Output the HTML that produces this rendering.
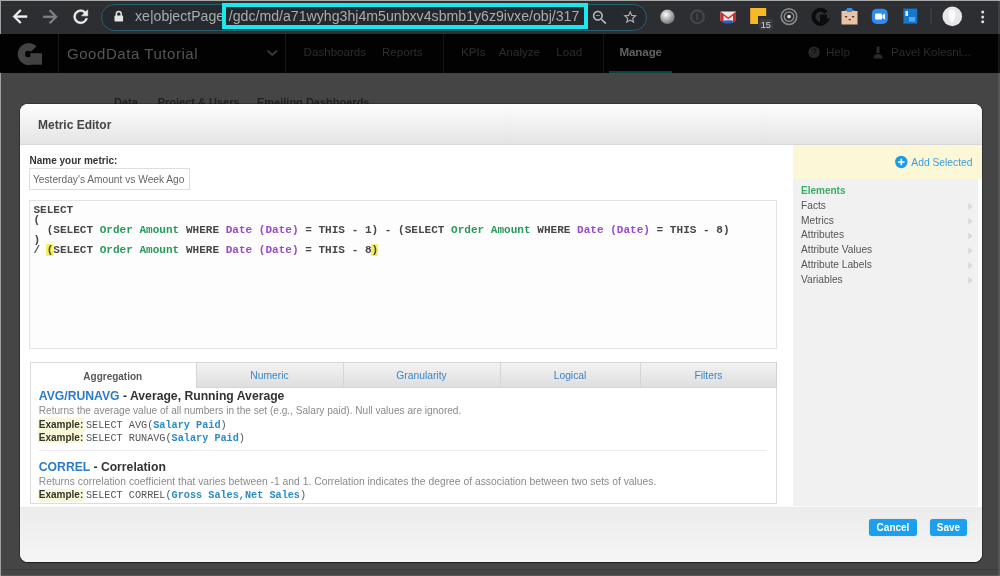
<!DOCTYPE html>
<html><head><meta charset="utf-8">
<style>
*{margin:0;padding:0;box-sizing:border-box}
html,body{width:1000px;height:576px;overflow:hidden;background:#454545;font-family:"Liberation Sans",sans-serif;position:relative}
.a{position:absolute}
.t{position:absolute;white-space:nowrap;line-height:1}
svg{position:absolute;overflow:visible}
</style></head>
<body><div id="root" style="position:absolute;left:0;top:0;width:1000px;height:576px;background:#454545;filter:blur(0.4px)">
<div class="a" style="left:0px;top:0px;width:1000.00px;height:34.00px;background:#2c2e32"></div>
<div class="a" style="left:0px;top:0px;width:1000.00px;height:1.00px;background:#a8a8a8"></div>
<div class="a" style="left:0px;top:5px;width:1000.00px;height:1.00px;background:#33353a"></div>
<div class="a" style="left:0px;top:0px;width:1.00px;height:576.00px;background:#a0a0a0"></div>
<svg style="left:0;top:0" width="100" height="34"><path transform="translate(9.5,6) scale(0.875)" d="M20 11H7.83l5.59-5.59L12 4l-8 8 8 8 1.41-1.41L7.83 13H20v-2z" fill="#f0f0f0" stroke="#f0f0f0" stroke-width="0.7"/><path transform="translate(39.9,6.3) scale(0.875)" d="M12 4l-1.41 1.41L16.17 11H4v2h12.17l-5.58 5.59L12 20l8-8z" fill="#808285" stroke="#808285" stroke-width="0.7"/><path transform="translate(70.3,6.3) scale(0.87)" d="M17.65 6.35C16.2 4.9 14.21 4 12 4c-4.42 0-7.99 3.58-7.99 8s3.57 8 7.99 8c3.730 0 6.84-2.55 7.73-6h-2.08c-.82 2.33-3.04 4-5.65 4-3.31 0-6-2.690-6-6s2.69-6 6-6c1.66 0 3.14.69 4.22 1.78L13 11h7V4l-2.35 2.35z" fill="#f0f0f0" stroke="#f0f0f0" stroke-width="0.7"/></svg>
<div class="a" style="left:100.5px;top:3.5px;width:546.00px;height:27.00px;border-radius:13.5px;background:#26292d;border:1.8px solid #27616f"></div>
<svg style="left:0;top:0" width="130" height="34"><path d="M116.4 16V13.9A2.4 2.4 0 0 1 121.2 13.9V16" fill="none" stroke="#e4e4e4" stroke-width="1.5"/><rect x="114.5" y="15.6" width="8.6" height="6" rx="0.8" fill="#e4e4e4"/></svg>
<div class="t" style="left:135.00px;top:9.02px;font-size:14.1px;color:#a9acaf;font-weight:normal;font-family:'Liberation Sans',sans-serif;">xe|objectPage</div>
<div class="a" style="left:222px;top:3px;width:366.00px;height:26.00px;border:4.5px solid #19e8ec"></div>
<div class="a" style="left:226.5px;top:7.5px;width:357.00px;height:17.00px;background:#25282c"></div>
<div class="t" style="left:228.75px;top:8.97px;font-size:14.15px;color:#a9acaf;font-weight:normal;font-family:'Liberation Sans',sans-serif;">/gdc/md/a71wyhg3hj4m5unbxv4sbmb1y6z9ivxe/obj/317</div>
<svg style="left:0;top:0" width="660" height="34"><path transform="translate(590.5,8.3) scale(0.78)" d="M15.5 14h-.79l-.28-.27C15.41 12.59 16 11.110 16 9.5 16 5.91 13.09 3 9.5 3S3 5.91 3 9.5 5.91 16 9.5 16c1.61 0 3.09-.59 4.23-1.57l.27.28v.79l5 4.99L20.49 19l-4.99-5zm-6 0C7.01 14 5 11.99 5 9.5S7.01 5 9.5 5 14 7.01 14 9.5 11.99 14 9.5 14zM7 9h5v1H7z" fill="#b4b6b8"/><path transform="translate(622.04,9.04) scale(0.68)" d="M22 9.24l-7.19-.62L12 2 9.19 8.63 2 9.24l5.46 4.73L5.820 21 12 17.27 18.18 21l-1.63-7.03L22 9.24zM12 15.4l-3.76 2.27 1-4.28-3.32-2.88 4.38-.38L12 6.1l1.71 4.04 4.38.38-3.32 2.88 1 4.28L12 15.4z" fill="#b4b6b8"/></svg>
<svg style="left:0;top:0" width="1000" height="34"><defs><radialGradient id="sph" cx="0.4" cy="0.35" r="0.7"><stop offset="0" stop-color="#ffffff"/><stop offset="0.35" stop-color="#c8c8c8"/><stop offset="1" stop-color="#6e6e6e"/></radialGradient></defs><circle cx="667.4" cy="16.8" r="7.2" fill="url(#sph)"/><circle cx="697.4" cy="16.8" r="6.4" fill="none" stroke="#45464a" stroke-width="2.2"/><path d="M697.2 13.5V20" stroke="#45464a" stroke-width="1.8"/><path d="M720.5 11.5H736V21H720.5Z" fill="#e8e8e8"/><path d="M720.5 11.5L728.2 17.5L736 11.5V21H733V15.5L728.2 19.3L723.5 15.5V21H720.5Z" fill="#d8262b"/><path d="M721 21.5Q728 19 735.5 21.5Q733 24 728 23.5Q723 24 721 21.5Z" fill="#2b5fb8"/><path d="M750.2 8H766.2V16H758V24H750.2Z" fill="#f7b928"/><rect x="758.8" y="18.8" width="14" height="11" rx="2" fill="#3b3c40"/><text x="765.8" y="28" font-family="Liberation Sans" font-size="9" fill="#d8d8d8" text-anchor="middle">15</text><circle cx="789" cy="16.6" r="7.8" fill="none" stroke="#8c8c8c" stroke-width="1.5"/><circle cx="789" cy="16.6" r="4.8" fill="none" stroke="#8c8c8c" stroke-width="1.3"/><circle cx="789" cy="16.6" r="1.8" fill="#dedede"/><path d="M826 12.5A7 7 0 1 0 826.5 20.5L822 20.5L822 16.5L827 16.5" fill="none" stroke="#0c0c0c" stroke-width="4"/><rect x="841.5" y="11" width="16" height="13.5" fill="#e9c3a6"/><path d="M844 11Q849.5 6.5 855 11Z" fill="#3a8ad8"/><rect x="847" y="8" width="5" height="4" fill="#3a8ad8"/><rect x="845" y="16" width="2.2" height="1.4" fill="#5a3a2a"/><rect x="852" y="16" width="2.2" height="1.4" fill="#5a3a2a"/><rect x="848.5" y="19" width="2.5" height="1.2" fill="#5a3a2a"/><rect x="871.8" y="8.8" width="16" height="15.2" rx="5" fill="#2d8cf0"/><rect x="875" y="13.5" width="7" height="6" rx="1" fill="#fff"/><path d="M882.5 15L885 13.5V19.5L882.5 18Z" fill="#fff"/><rect x="903.4" y="8.6" width="13.8" height="15" fill="#1478d0"/><rect x="905.5" y="11" width="2.5" height="5" fill="#e0f0ff"/><rect x="909" y="17" width="6" height="4.5" fill="#5aa8e8"/><rect x="930.5" y="8" width="1" height="16" fill="#4a4b4e"/><circle cx="952.3" cy="16.4" r="9.8" fill="#e6e6e6"/><path d="M950 10Q955 9 955.5 14Q955.5 19 952 23Q948.5 19 948.5 14Q948.5 11 950 10Z" fill="#fafafa"/><circle cx="982.7" cy="12" r="1.5" fill="#e0e0e0"/><circle cx="982.7" cy="17" r="1.5" fill="#e0e0e0"/><circle cx="982.7" cy="21.8" r="1.5" fill="#e0e0e0"/></svg>
<div class="a" style="left:0px;top:34px;width:1000.00px;height:38.50px;background:#020202"></div>
<svg style="left:0;top:0" width="60" height="80"><path d="M36.5 46.3A11 11 0 1 0 39.7 54.1L28.7 54.1Z" fill="#434343"/><circle cx="28.2" cy="54" r="3.2" fill="#020202"/><rect x="30.3" y="53.2" width="11.7" height="11.5" fill="#414141"/></svg>
<div class="a" style="left:57.5px;top:34px;width:1.00px;height:38.50px;background:#161616"></div>
<div class="t" style="left:67.00px;top:45.65px;font-size:15px;color:#565656;font-weight:normal;font-family:'Liberation Sans',sans-serif;letter-spacing:0.55px">GoodData Tutorial</div>
<svg style="left:0;top:0" width="300" height="80"><path d="M267.5 50.5L272.2 55L277 50.5" fill="none" stroke="#3a3a3a" stroke-width="1.8"/></svg>
<div class="a" style="left:285px;top:34px;width:1.00px;height:38.50px;background:#161616"></div>
<div class="t" style="left:303.60px;top:46.14px;font-size:11.6px;color:#2e2e2e;font-weight:normal;font-family:'Liberation Sans',sans-serif;">Dashboards</div>
<div class="t" style="left:382.00px;top:46.14px;font-size:11.6px;color:#2e2e2e;font-weight:normal;font-family:'Liberation Sans',sans-serif;">Reports</div>
<div class="a" style="left:442.5px;top:34px;width:1.00px;height:38.50px;background:#161616"></div>
<div class="t" style="left:461.00px;top:46.14px;font-size:11.6px;color:#2e2e2e;font-weight:normal;font-family:'Liberation Sans',sans-serif;">KPIs</div>
<div class="t" style="left:498.80px;top:46.14px;font-size:11.6px;color:#2e2e2e;font-weight:normal;font-family:'Liberation Sans',sans-serif;">Analyze</div>
<div class="t" style="left:556.30px;top:46.14px;font-size:11.6px;color:#2e2e2e;font-weight:normal;font-family:'Liberation Sans',sans-serif;">Load</div>
<div class="a" style="left:602.5px;top:34px;width:1.00px;height:38.50px;background:#161616"></div>
<div class="t" style="left:619.40px;top:46.14px;font-size:11.6px;color:#626262;font-weight:bold;font-family:'Liberation Sans',sans-serif;letter-spacing:-0.1px">Manage</div>
<div class="a" style="left:609px;top:70.5px;width:62.50px;height:2.00px;background:#0f4244"></div>
<svg style="left:0;top:0" width="1000" height="80"><circle cx="814" cy="52.3" r="5.8" fill="#262626"/><path d="M812.3 50.8Q812.5 49 814.2 49Q816 49.2 815.8 50.9Q815.5 52 814.3 52.6V53.8" fill="none" stroke="#121212" stroke-width="1.1"/><path d="M876.5 46.5H879.5V53H876.5Z" fill="#2a2a2a"/><path d="M873.5 58.5Q873.5 54 878 54Q882.5 54 882.5 58.5Z" fill="#2a2a2a"/></svg>
<div class="t" style="left:826.00px;top:46.14px;font-size:11.6px;color:#2c2c2c;font-weight:normal;font-family:'Liberation Sans',sans-serif;">Help</div>
<div class="t" style="left:891.00px;top:46.14px;font-size:11.6px;color:#2c2c2c;font-weight:normal;font-family:'Liberation Sans',sans-serif;">Pavel Kolesni...</div>
<div class="t" style="left:114.00px;top:96.65px;font-size:11px;color:#202020;font-weight:bold;font-family:'Liberation Sans',sans-serif;">Data</div>
<div class="t" style="left:157.70px;top:96.65px;font-size:11px;color:#202020;font-weight:bold;font-family:'Liberation Sans',sans-serif;">Project &amp; Users</div>
<div class="t" style="left:257.00px;top:96.65px;font-size:11px;color:#202020;font-weight:bold;font-family:'Liberation Sans',sans-serif;">Emailing Dashboards</div>
<div class="a" style="left:20px;top:103.5px;width:962px;height:458.5px;background:#fff;border-radius:8px;overflow:hidden;box-shadow:0 0 0 1px rgba(0,0,0,0.22),0 1px 1.5px rgba(0,0,0,0.45)">
<div class="a" style="left:0px;top:0px;width:962.00px;height:41.50px;background:linear-gradient(#fdfdfd,#e4e4e4);border-bottom:1px solid #d8d8d8"></div>
<div class="a" style="left:0px;top:402px;width:962.00px;height:56.50px;background:linear-gradient(#ececec,#f5f5f5);border-top:1px solid #fafafa"></div>
</div>
<div class="t" style="left:38.00px;top:118.60px;font-size:12px;color:#454545;font-weight:bold;font-family:'Liberation Sans',sans-serif;">Metric Editor</div>
<div class="t" style="left:29.50px;top:155.90px;font-size:10px;color:#333;font-weight:bold;font-family:'Liberation Sans',sans-serif;">Name your metric:</div>
<div class="a" style="left:29.4px;top:168.4px;width:161.00px;height:21.60px;border:1px solid #dedede;background:#fff"></div>
<div class="t" style="left:33.00px;top:175.13px;font-size:10.2px;color:#666;font-weight:normal;font-family:'Liberation Sans',sans-serif;">Yesterday's Amount vs Week Ago</div>
<div class="a" style="left:29.4px;top:199.5px;width:747.60px;height:149.50px;border:1px solid #e3e3e3;background:#fdfdfd"></div>
<div class="a" style="left:793px;top:145px;width:185.00px;height:360.50px;background:#f1f1f1"></div>
<div class="a" style="left:793px;top:145px;width:189.00px;height:33.80px;background:#fcf7d6"></div>
<div class="t" style="left:33.40px;top:204.69px;font-size:11.05px;color:#474747;font-weight:bold;font-family:'Liberation Mono',monospace;">SELECT</div>
<div class="t" style="left:33.40px;top:214.89px;font-size:11.05px;color:#474747;font-weight:bold;font-family:'Liberation Mono',monospace;">(</div>
<div class="t" style="left:33.40px;top:224.99px;font-size:11.05px;color:#474747;font-weight:bold;font-family:'Liberation Mono',monospace;">&nbsp;&nbsp;(SELECT&nbsp;</div>
<div class="t" style="left:99.70px;top:224.99px;font-size:11.05px;color:#27995a;font-weight:bold;font-family:'Liberation Mono',monospace;">Order&nbsp;Amount</div>
<div class="t" style="left:179.26px;top:224.99px;font-size:11.05px;color:#474747;font-weight:bold;font-family:'Liberation Mono',monospace;">&nbsp;WHERE&nbsp;</div>
<div class="t" style="left:225.67px;top:224.99px;font-size:11.05px;color:#9a4cc8;font-weight:bold;font-family:'Liberation Mono',monospace;">Date&nbsp;(Date)</div>
<div class="t" style="left:298.60px;top:224.99px;font-size:11.05px;color:#474747;font-weight:bold;font-family:'Liberation Mono',monospace;">&nbsp;=&nbsp;THIS&nbsp;-&nbsp;1)&nbsp;-&nbsp;(SELECT&nbsp;</div>
<div class="t" style="left:451.09px;top:224.99px;font-size:11.05px;color:#27995a;font-weight:bold;font-family:'Liberation Mono',monospace;">Order&nbsp;Amount</div>
<div class="t" style="left:530.65px;top:224.99px;font-size:11.05px;color:#474747;font-weight:bold;font-family:'Liberation Mono',monospace;">&nbsp;WHERE&nbsp;</div>
<div class="t" style="left:577.06px;top:224.99px;font-size:11.05px;color:#9a4cc8;font-weight:bold;font-family:'Liberation Mono',monospace;">Date&nbsp;(Date)</div>
<div class="t" style="left:649.99px;top:224.99px;font-size:11.05px;color:#474747;font-weight:bold;font-family:'Liberation Mono',monospace;">&nbsp;=&nbsp;THIS&nbsp;-&nbsp;8)</div>
<div class="t" style="left:33.40px;top:235.09px;font-size:11.05px;color:#474747;font-weight:bold;font-family:'Liberation Mono',monospace;">)</div>
<div class="a" style="left:46.459999999999994px;top:243.8px;width:6.43px;height:12.20px;background:#f4f25a"></div>
<div class="a" style="left:371.33px;top:243.8px;width:6.43px;height:12.20px;background:#f4f25a"></div>
<div class="t" style="left:33.40px;top:245.19px;font-size:11.05px;color:#474747;font-weight:bold;font-family:'Liberation Mono',monospace;">/&nbsp;(SELECT&nbsp;</div>
<div class="t" style="left:99.70px;top:245.19px;font-size:11.05px;color:#27995a;font-weight:bold;font-family:'Liberation Mono',monospace;">Order&nbsp;Amount</div>
<div class="t" style="left:179.26px;top:245.19px;font-size:11.05px;color:#474747;font-weight:bold;font-family:'Liberation Mono',monospace;">&nbsp;WHERE&nbsp;</div>
<div class="t" style="left:225.67px;top:245.19px;font-size:11.05px;color:#9a4cc8;font-weight:bold;font-family:'Liberation Mono',monospace;">Date&nbsp;(Date)</div>
<div class="t" style="left:298.60px;top:245.19px;font-size:11.05px;color:#474747;font-weight:bold;font-family:'Liberation Mono',monospace;">&nbsp;=&nbsp;THIS&nbsp;-&nbsp;8)</div>
<div class="a" style="left:29.5px;top:362.4px;width:747.50px;height:141.60px;border:1px solid #dcdcdc;background:#fff"></div>
<div class="a" style="left:29.5px;top:362.4px;width:166.50px;height:25.60px;background:#fff;border-top:1px solid #dcdcdc;border-left:1px solid #dcdcdc"></div>
<div class="t" style="left:29.5px;width:166.5px;text-align:center;top:371.90px;font-size:10px;font-weight:bold;color:#595959">Aggregation</div>
<div class="a" style="left:196px;top:362.4px;width:147.00px;height:25.60px;background:linear-gradient(#f3f3f3,#dedede);border:1px solid #d6d6d6;border-right:none"></div>
<div class="t" style="left:196px;width:147px;text-align:center;top:371.44px;font-size:10.3px;color:#3a86c8">Numeric</div>
<div class="a" style="left:343px;top:362.4px;width:157.00px;height:25.60px;background:linear-gradient(#f3f3f3,#dedede);border:1px solid #d6d6d6;border-right:none"></div>
<div class="t" style="left:343px;width:157px;text-align:center;top:371.44px;font-size:10.3px;color:#3a86c8">Granularity</div>
<div class="a" style="left:500px;top:362.4px;width:140.00px;height:25.60px;background:linear-gradient(#f3f3f3,#dedede);border:1px solid #d6d6d6;border-right:none"></div>
<div class="t" style="left:500px;width:140px;text-align:center;top:371.44px;font-size:10.3px;color:#3a86c8">Logical</div>
<div class="a" style="left:640px;top:362.4px;width:137.00px;height:25.60px;background:linear-gradient(#f3f3f3,#dedede);border:1px solid #d6d6d6;border-right:none;border-right:1px solid #d0d0d0"></div>
<div class="t" style="left:640px;width:137px;text-align:center;top:371.44px;font-size:10.3px;color:#3a86c8">Filters</div>
<div class="t" style="left:38.80px;top:390.23px;font-size:12.2px;color:#333;font-weight:bold;font-family:'Liberation Sans',sans-serif;"><span style="color:#2a7cc8">AVG/RUNAVG</span> - Average, Running Average</div>
<div class="t" style="left:38.80px;top:405.62px;font-size:10.1px;color:#8a8a8a;font-weight:normal;font-family:'Liberation Sans',sans-serif;">Returns the average value of all numbers in the set (e.g., Salary paid). Null values are ignored.</div>
<div class="a" style="left:38.2px;top:417.7px;width:45.50px;height:25.80px;background:#f8f7da"></div>
<div class="t" style="left:38.80px;top:420.10px;font-size:10px;color:#35352a;font-weight:bold;font-family:'Liberation Sans',sans-serif;">Example:</div>
<div class="t" style="left:86px;top:420.75px;font-size:10.2px;font-family:'Liberation Mono',monospace;color:#555">SELECT AVG(<b style="color:#2a8cc6">Salary Paid</b>)</div>
<div class="t" style="left:38.80px;top:433.30px;font-size:10px;color:#35352a;font-weight:bold;font-family:'Liberation Sans',sans-serif;">Example:</div>
<div class="t" style="left:86px;top:433.95px;font-size:10.2px;font-family:'Liberation Mono',monospace;color:#555">SELECT RUNAVG(<b style="color:#2a8cc6">Salary Paid</b>)</div>
<div class="a" style="left:39.4px;top:450px;width:727.60px;height:1.00px;background:#ececec"></div>
<div class="t" style="left:38.80px;top:460.83px;font-size:12.2px;color:#333;font-weight:bold;font-family:'Liberation Sans',sans-serif;"><span style="color:#2a7cc8">CORREL</span> - Correlation</div>
<div class="t" style="left:38.80px;top:477.22px;font-size:10.33px;color:#8a8a8a;font-weight:normal;font-family:'Liberation Sans',sans-serif;">Returns correlation coefficient that varies between -1 and 1. Correlation indicates the degree of association between two sets of values.</div>
<div class="a" style="left:38.2px;top:488.5px;width:45.50px;height:13.50px;background:#f8f7da"></div>
<div class="t" style="left:38.80px;top:490.00px;font-size:10px;color:#35352a;font-weight:bold;font-family:'Liberation Sans',sans-serif;">Example:</div>
<div class="t" style="left:86px;top:490.65px;font-size:10.2px;font-family:'Liberation Mono',monospace;color:#555">SELECT CORREL(<b style="color:#2a8cc6">Gross Sales,Net Sales</b>)</div>
<svg style="left:0;top:0" width="1000" height="200"><circle cx="901.3" cy="162" r="6.2" fill="#1e9be8"/><path d="M898 162H904.6M901.3 158.7V165.3" stroke="#fff" stroke-width="1.6"/></svg>
<div class="t" style="left:911.30px;top:158.05px;font-size:10.3px;color:#3a9ee0;font-weight:normal;font-family:'Liberation Sans',sans-serif;">Add Selected</div>
<div class="t" style="left:801.00px;top:186.00px;font-size:10px;color:#36ae64;font-weight:bold;font-family:'Liberation Sans',sans-serif;">Elements</div>
<div class="t" style="left:801.00px;top:200.83px;font-size:10.2px;color:#555;font-weight:normal;font-family:'Liberation Sans',sans-serif;">Facts</div>
<svg style="left:0;top:0" width="1000" height="300"><path d="M968.3 202.8L972.6 206.5L968.3 210.2Z" fill="#d8d8d8"/></svg>
<div class="t" style="left:801.00px;top:215.58px;font-size:10.2px;color:#555;font-weight:normal;font-family:'Liberation Sans',sans-serif;">Metrics</div>
<svg style="left:0;top:0" width="1000" height="300"><path d="M968.3 217.55L972.6 221.25L968.3 224.95Z" fill="#d8d8d8"/></svg>
<div class="t" style="left:801.00px;top:230.33px;font-size:10.2px;color:#555;font-weight:normal;font-family:'Liberation Sans',sans-serif;">Attributes</div>
<svg style="left:0;top:0" width="1000" height="300"><path d="M968.3 232.3L972.6 236.0L968.3 239.7Z" fill="#d8d8d8"/></svg>
<div class="t" style="left:801.00px;top:245.08px;font-size:10.2px;color:#555;font-weight:normal;font-family:'Liberation Sans',sans-serif;">Attribute Values</div>
<svg style="left:0;top:0" width="1000" height="300"><path d="M968.3 247.05L972.6 250.75L968.3 254.45Z" fill="#d8d8d8"/></svg>
<div class="t" style="left:801.00px;top:259.83px;font-size:10.2px;color:#555;font-weight:normal;font-family:'Liberation Sans',sans-serif;">Attribute Labels</div>
<svg style="left:0;top:0" width="1000" height="300"><path d="M968.3 261.8L972.6 265.5L968.3 269.2Z" fill="#d8d8d8"/></svg>
<div class="t" style="left:801.00px;top:274.58px;font-size:10.2px;color:#555;font-weight:normal;font-family:'Liberation Sans',sans-serif;">Variables</div>
<svg style="left:0;top:0" width="1000" height="300"><path d="M968.3 276.55L972.6 280.25L968.3 283.95Z" fill="#d8d8d8"/></svg>
<div class="a" style="left:869.4px;top:518.8px;width:48.00px;height:16.80px;background:#1c9fee;border-radius:3px;box-shadow:0 0 1px rgba(0,80,160,.4)"></div>
<div class="t" style="left:876.60px;top:523.10px;font-size:10px;color:#fff;font-weight:bold;font-family:'Liberation Sans',sans-serif;">Cancel</div>
<div class="a" style="left:929.6px;top:518.8px;width:37.60px;height:16.80px;background:#1c9fee;border-radius:3px;box-shadow:0 0 1px rgba(0,80,160,.4)"></div>
<div class="t" style="left:936.80px;top:523.10px;font-size:10px;color:#fff;font-weight:bold;font-family:'Liberation Sans',sans-serif;">Save</div>
<div class="a" style="left:1px;top:569px;width:999.00px;height:1.00px;background:#3e3e3e"></div>
<div class="a" style="left:1px;top:575px;width:999.00px;height:1.00px;background:#585858"></div>
<div class="a" style="left:998px;top:0px;width:2.00px;height:576.00px;background:rgba(255,255,255,0.09)"></div>
</div></body></html>
